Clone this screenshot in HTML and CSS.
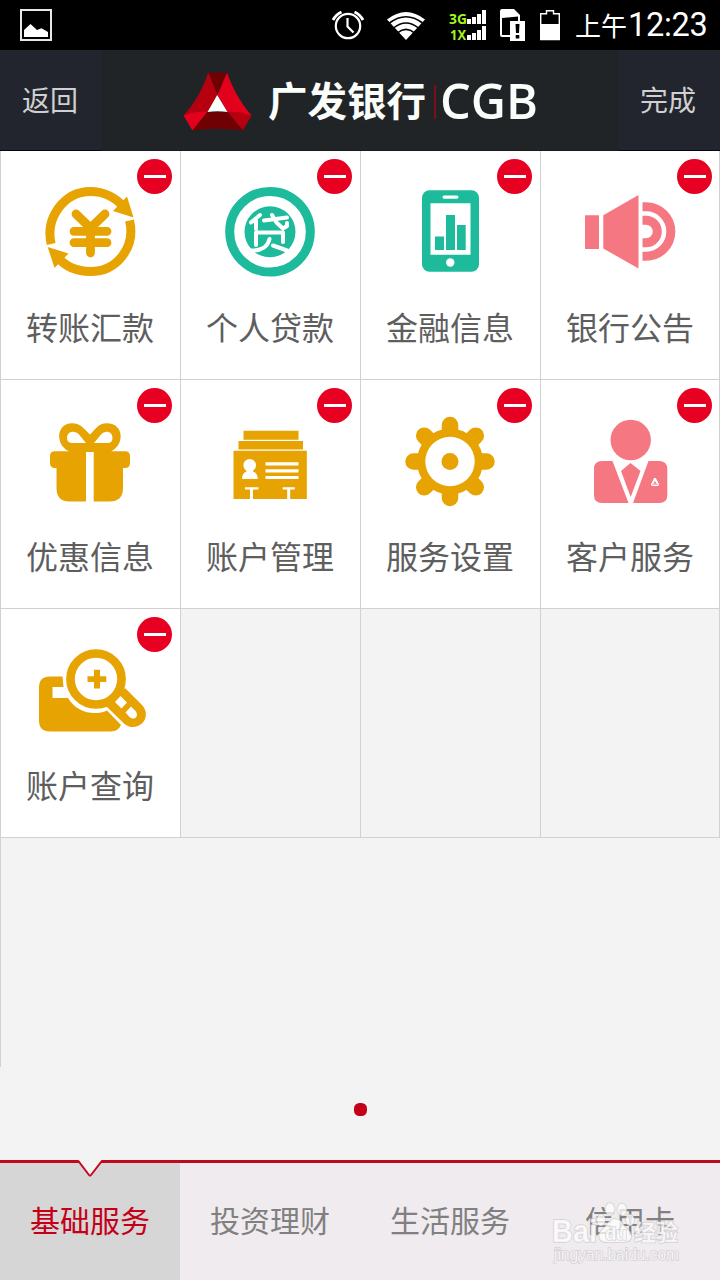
FILE: index.html
```html
<!DOCTYPE html>
<html lang="zh-CN">
<head>
<meta charset="utf-8">
<title>广发银行</title>
<link rel="stylesheet" href="styles.css">
</head>
<body>
<div class="screen">
  <div class="status">
    <svg class="status-photo" width="34" height="34" viewBox="19 8 34 34">
      <rect x="21" y="10" width="30" height="30" fill="none" stroke="#e8e8e8" stroke-width="2"/>
      <path d="M24 37V30L30.500 24L37 30L41.500 28.300L48 32V37Z" fill="#fff"/>
    </svg>
    <svg class="status-icons" width="236" height="50" viewBox="328 0 236 50">
      <g fill="none" stroke="#fff" stroke-width="2.200">
        <circle cx="348" cy="26" r="12.200"/>
        <path d="M333 20Q336 14.500 341.500 12M363 20Q360 14.500 354.500 12" stroke-width="2.800"/>
        <path d="M347.500 18V26.500L353.500 32.500"/>
      </g>
      <path d="M387 19.500Q406 4.500 425 19.500L406 40Z" fill="#fff"/>
      <g fill="none" stroke="#000" stroke-width="1.600">
        <path d="M389.500 23Q406 10.500 422.500 23"/>
        <path d="M393.500 28Q406 18 418.500 28"/>
        <path d="M397.500 32.800Q406 26 414.500 32.800"/>
      </g>
      <g class="net" fill="#a4f51b">
        <text x="449" y="24" textLength="18" lengthAdjust="spacingAndGlyphs">3G</text>
        <text x="450" y="40" textLength="16" lengthAdjust="spacingAndGlyphs">1X</text>
      </g>
      <path d="M467 19h4v5h-4zM472 17h4v7h-4zM477 14h4v10h-4zM482 10h4v14h-4zM467 35h4v5h-4zM472 33h4v7h-4zM477 30h4v10h-4zM482 26h4v14h-4z" fill="#fff"/>
      <path d="M500 11Q500 9 502 9H514L520 15V21H525V41H510V37H502Q500 37 500 35ZM502 18V35H510V21H518V16.500Z" fill="#fff" fill-rule="evenodd"/>
      <path d="M515.500 24H519.500L519 33H516ZM515.700 35h3.600v3.500h-3.600z" fill="#000"/>
      <path d="M540.700 39.500V13.700H546.500V10.700H553.500V13.700H559.300V39.500Z" fill="none" stroke="#fff" stroke-width="1.400"/>
      <path d="M540 24H560V40H540Z" fill="#fff"/>
    </svg>
    <div class="clock"><span class="clock-half">上午</span><span class="clock-time">12:23</span></div>
  </div>

  <header class="header">
    <div class="header-side">返回</div>
    <svg class="logo" width="360" height="100" viewBox="180 50 360 100">
      <path d="M208.300 72.500H227L217.500 95Z" fill="#6f0003"/>
      <path d="M208.300 72.500L217.500 95L207.500 112L183.500 115.500C196 102 203 88 208.300 72.500Z" fill="#b60010"/>
      <path d="M227 72.500C232 87 240 102 251.500 115.500L227.500 112L217.500 95Z" fill="#e2001c"/>
      <path d="M183.500 115.500Q195 110.500 207.500 112L192.500 130.500Z" fill="#e2001c"/>
      <path d="M251.500 115.500Q239 110.500 227.500 112L242.800 130.500Z" fill="#b60010"/>
      <path d="M207.500 112H227.500L242.800 130.500Q217.500 127 192.500 130.500Z" fill="#6f0003"/>
      <path d="M217.200 95L227.500 112Q217.500 110.500 207.500 112Z" fill="#fafdfa"/>
      <text class="logo-cn" x="268" y="116" textLength="158" lengthAdjust="spacingAndGlyphs">广发银行</text>
      <path d="M435 85V119" stroke="#980b17" stroke-width="1.500"/>
      <text class="logo-en" x="440" y="119" textLength="98" lengthAdjust="spacingAndGlyphs">CGB</text>
    </svg>
    <div class="header-side">完成</div>
  </header>

  <main class="grid">
    <div class="cell filled"><i class="remove"></i>
      <svg class="icon gold" viewBox="30 31 120 100">
        <g fill="none" stroke="currentColor">
          <path d="M51.200 94C45 68 64 41.500 90.500 41.500C104 41.500 116 48 123.500 57" stroke-width="9"/>
          <path d="M129.500 70.500C136 97 117 121.500 90.500 121.500C77 121.500 65 116 57.500 107" stroke-width="9"/>
          <path d="M76 64L90.500 78L105 64M74 81.300H107M74 92.700H107M90.500 78V103" stroke-width="8.800" stroke-linecap="round" stroke-linejoin="round"/>
        </g>
        <path d="M127 46.500L133.500 67.500L113 61ZM47.700 97L68.500 103.500L54.500 118Z" fill="currentColor"/>
        <path d="M80 87H86M95 87H102" stroke="#fff" stroke-width="2"/>
      </svg><span>转账汇款</span></div>
    <div class="cell filled"><i class="remove"></i>
      <svg class="icon green" viewBox="30 31 120 100">
        <circle cx="90" cy="81.800" r="40.300" fill="none" stroke="currentColor" stroke-width="9"/>
        <circle cx="90" cy="81.800" r="25.500" fill="currentColor"/>
        <g fill="none" stroke="#fff" stroke-width="4" stroke-linecap="round" stroke-linejoin="round">
          <path d="M80 65L71 72.500M76 71V79M84 70.500L107 67.500M92 65L96.500 72.500L103 78.500L107 76V73M76 95V82.500H103V92M89.500 89C88 96 82 101 71 100.500M93 95.500L107 100.500"/>
        </g>
      </svg><span>个人贷款</span></div>
    <div class="cell filled"><i class="remove"></i>
      <svg class="icon green" viewBox="30 31 120 100">
        <rect x="62" y="40.200" width="57" height="81.500" rx="7.500" fill="currentColor"/>
        <g fill="#fff"><rect x="82.500" y="45.500" width="16" height="3.200" rx="1.600"/><path d="M70.500 53.300h40v51.500h-40z"/><circle cx="90.300" cy="112.500" r="4.200"/></g>
        <path d="M75 86.500h9V100h-9zM86 65h9v35h-9zM97 75h8.700v25H97z" fill="currentColor"/>
      </svg><span>金融信息</span></div>
    <div class="cell filled"><i class="remove"></i>
      <svg class="icon pink" viewBox="30 31 120 100">
        <path d="M45 65.300h14v33.700H45zM63.300 65.300L98.500 45V118.500L63.300 98.500Z" fill="currentColor"/>
        <path d="M102.500 56.700H106A24.800 24.800 0 0 1 106 106.300H102.500M102.500 70.200H106A11.300 11.300 0 0 1 106 92.800H102.500" fill="none" stroke="currentColor" stroke-width="9"/>
      </svg><span>银行公告</span></div>

    <div class="cell filled"><i class="remove"></i>
      <svg class="icon gold" viewBox="30 30 120 100">
        <path d="M55 71.300H69C55 65 56 43.300 72 43.300C81 43.300 85 50 90 54.500C95 50 98 43.300 107 43.300C124 43.300 125 65 111 71.300H125Q130 71.300 130 76V83Q130 88 125 88H123V108Q123 121.500 109.500 121.500H69.500Q56.500 121.500 56.500 108V88H55Q50 88 50 83V76Q50 71.300 55 71.300Z" fill="currentColor"/>
        <path d="M67 58C67 51 75 50 79 54.500L86 63H72.500Q67 63 67 58ZM112.500 58C112.500 51 105 50 101 54.500L94 63H107.500Q112.500 63 112.500 58ZM86 72h7.700v50H86z" fill="#fff"/>
      </svg><span>优惠信息</span></div>
    <div class="cell filled"><i class="remove"></i>
      <svg class="icon gold" viewBox="30 30 120 100">
        <path d="M63.500 50.700h55v9h-55zM58.500 61h64.500v8.500H58.500zM53.500 70.700h73.300V119H53.500z" fill="currentColor"/>
        <g fill="#fff"><circle cx="69.700" cy="85.300" r="6.300"/><path d="M66.500 89H73V91.500Q77.800 93 77.800 99H62Q62 93 66.500 91.500ZM85.500 82.300h33v3.200h-33zM85.500 89.300h33v3.200h-33zM85.500 96h33v3h-33zM65 107.300h13.500v2.200H73V119h-3v-9.500h-5zM102.700 107.300h12v2.200h-4.500V119h-3v-9.500h-4.500z"/></g>
      </svg><span>账户管理</span></div>
    <div class="cell filled"><i class="remove"></i>
      <svg class="icon gold" viewBox="30 30 120 100">
        <path d="M90 45V118M53.500 81.500H126.500M64.200 55.700L115.800 107.300M115.800 55.700L64.200 107.300" stroke="currentColor" stroke-width="16.500" stroke-linecap="round"/>
        <circle cx="90" cy="81.500" r="33" fill="currentColor"/>
        <circle cx="90" cy="81.500" r="24.700" fill="#fff"/><circle cx="90" cy="81.500" r="8.500" fill="currentColor"/>
      </svg><span>服务设置</span></div>
    <div class="cell filled"><i class="remove"></i>
      <svg class="icon pink" viewBox="30 30 120 100">
        <circle cx="90.700" cy="60" r="20.200" fill="currentColor"/>
        <path d="M62 81H72.500L88.500 123H62Q54 123 54 115V89Q54 81 62 81ZM108.500 81H119Q127.300 81 127.300 89V115Q127.300 123 119 123H93Z" fill="currentColor"/>
        <path d="M90.500 83L100.500 91L90.700 117L81 91Z" fill="currentColor"/>
        <path d="M114.200 98H115.800L119.200 104.500L118 106H112L110.800 104.500Z" fill="#fff"/><path d="M115 101.500L116.300 103.500H113.700ZM112 104.600H118" fill="currentColor" stroke="currentColor" stroke-width=".6"/>
      </svg><span>客户服务</span></div>

    <div class="cell filled"><i class="remove"></i>
      <svg class="icon gold" viewBox="30 31 120 100">
        <path d="M50 68.500H62.500L63.500 79H52.500V90H68C76 104 94 108.500 107 102.500L121 117Q118 123.500 111 123.500H50Q39 123.500 39 112.500V79.500Q39 68.500 50 68.500Z" fill="currentColor"/>
        <circle cx="96" cy="71" r="25.500" fill="none" stroke="currentColor" stroke-width="8.700"/>
        <path d="M125 80L142.500 97.500C147 103 147 110 142.500 115C137 120 130 120.500 124.500 116L106.500 98.500Z" fill="currentColor"/>
        <path d="M120.500 88L127 94.500L121.500 100.500L115 94ZM131 98.500L136 103.500Q138.500 108.500 134.500 110.500Q131.500 111 129.500 109L125.500 104.500Z" fill="#fff"/>
        <path d="M87.500 68.200H94V61.700H100V68.200H106.300V74H100V80.500H94V74H87.500Z" fill="currentColor"/>
      </svg><span>账户查询</span></div>
    <div class="cell"></div><div class="cell"></div><div class="cell"></div>
    <div class="cell open"></div>
  </main>

  <div class="pager"><span class="dot"></span></div>

  <nav class="tabs">
    <svg class="pointer" width="30" height="20" viewBox="75 1160 30 20">
      <path d="M78 1160L89 1175Q90 1176.300 91 1175L102 1160Z" fill="#f3f3f3"/>
      <path d="M75 1161.200H78.500L89 1175Q90 1176.300 91 1175L101.700 1161.200H105" fill="none" stroke="#c40a20" stroke-width="2"/>
    </svg>
    <div class="tab active">基础服务</div>
    <div class="tab">投资理财</div>
    <div class="tab">生活服务</div>
    <div class="tab">信用卡</div>
    <svg class="watermark" width="140" height="70" viewBox="548 1198 140 70">
      <g class="mark">
        <ellipse cx="601" cy="1220" rx="4" ry="5.500"/><ellipse cx="610" cy="1209" rx="4.500" ry="6"/><ellipse cx="622" cy="1209.500" rx="4.500" ry="6"/><ellipse cx="630" cy="1220" rx="4" ry="5.500"/>
        <path d="M615 1219C608 1219 607 1227 602 1230C596 1236 600 1243 608 1242H624C632 1242 634 1235 627 1229C623 1226 622 1219 615 1219Z"/>
        <text class="mark-name" x="552" y="1242" textLength="45" lengthAdjust="spacingAndGlyphs">Bai</text>
        <text class="mark-du" x="605" y="1240" textLength="22">du</text>
        <text class="mark-cn" x="634" y="1240" textLength="44">经验</text>
        <text class="mark-url" x="554" y="1260" textLength="125" lengthAdjust="spacingAndGlyphs">jingyan.baidu.com</text>
      </g>
    </svg>
  </nav>
</div>
</body>
</html>
```

FILE: styles.css
```css
* { box-sizing: border-box; }
body {
  margin: 0;
  font-family: Roboto, "Noto Sans CJK SC", sans-serif;
}
.screen {
  width: 720px;
  height: 1280px;
  display: flex;
  flex-direction: column;
  background: #f3f3f3;
  overflow: hidden;
}
.status {
  height: 50px;
  flex: none;
  display: flex;
  align-items: center;
  background: #000;
  color: #fff;
  padding-left: 19px;
}
.status-icons { margin-left: 275px; }
.net { font: bold 15px "Open Sans", sans-serif; }
.clock {
  display: flex;
  align-items: baseline;
  margin-left: 11px;
  line-height: 50px;
  white-space: nowrap;
}
.clock-half { font-family: "Noto Sans CJK SC", sans-serif; font-size: 26px; width: 53px; }
.clock-time { font-size: 32.500px; letter-spacing: -.3px; }
.header {
  height: 101px;
  flex: none;
  display: flex;
  justify-content: space-between;
  background: #212427;
  border-bottom: 1px solid #181a20;
}
.header-side {
  width: 102px;
  height: 101px;
  line-height: 104px;
  text-align: center;
  font-size: 28px;
  color: #d0d0d1;
  background: #22252d;
  border-bottom: 1px solid #05051a;
}
.header-side:first-child { padding-right: 2px; }
.header-side:last-child { padding-right: 2px; }
.logo-cn { font: bold 40px "Noto Sans CJK SC", sans-serif; fill: #fafdfa; }
.logo-en { font: 600 48px "Open Sans", sans-serif; fill: #fafdfa; }
.grid {
  display: grid;
  grid-template-columns: repeat(4, 180px);
  grid-auto-rows: 229px;
  flex: none;
}
.cell {
  position: relative;
  display: flex;
  flex-direction: column;
  align-items: center;
  padding-top: 30px;
  box-shadow: inset 1px 0 #d1d1d1, inset 0 -1px #d1d1d1;
}
.cell:nth-child(4n) { box-shadow: inset 1px 0 #d1d1d1, inset -1px -1px #d1d1d1; }
.cell.open { box-shadow: inset 1px 0 #d1d1d1; }
.filled { background: #fff; }
.cell span {
  margin-top: 24px;
  font-size: 32px;
  line-height: 48px;
  color: #5e5e5e;
  white-space: nowrap;
}
.icon { width: 120px; height: 100px; flex: none; }
.gold { color: #e7a302; }
.green { color: #1dbb9b; }
.pink { color: #f57782; }
.remove {
  position: absolute;
  top: 8px;
  right: 8px;
  width: 35px;
  height: 35px;
  border-radius: 50%;
  background: linear-gradient(#fff, #fff) center / 22px 3px no-repeat #e80022;
}
.pager {
  flex: 1;
  display: flex;
  justify-content: center;
  padding: 36px 0 0 1px;
}
.dot { width: 13px; height: 13px; border-radius: 5.500px; background: #c40018; }
.tabs {
  position: relative;
  height: 120px;
  flex: none;
  display: grid;
  grid-template-columns: repeat(4, 1fr);
  background: #f0ebee;
  border-top: 3px solid #bf0a1e;
}
.tab {
  text-align: center;
  font-size: 30px;
  line-height: 117px;
  color: #808080;
}
.tab.active { background: #d6d6d6; color: #c40018; }
.pointer { position: absolute; left: 75px; top: -3px; }
.watermark { position: absolute; left: 548px; top: 35px; }
.mark { fill: #fff; fill-opacity: .75; stroke: #c4c0c3; stroke-opacity: .6; stroke-width: 1.600; paint-order: stroke; }
.mark-name { font: bold 31px "Liberation Sans", sans-serif; }
.mark-du { font: bold 19px "Liberation Sans", sans-serif; }
.mark-cn { font: bold 22px "Noto Sans CJK SC", sans-serif; }
.mark-url { font: 16px "Liberation Sans", sans-serif; }
```
